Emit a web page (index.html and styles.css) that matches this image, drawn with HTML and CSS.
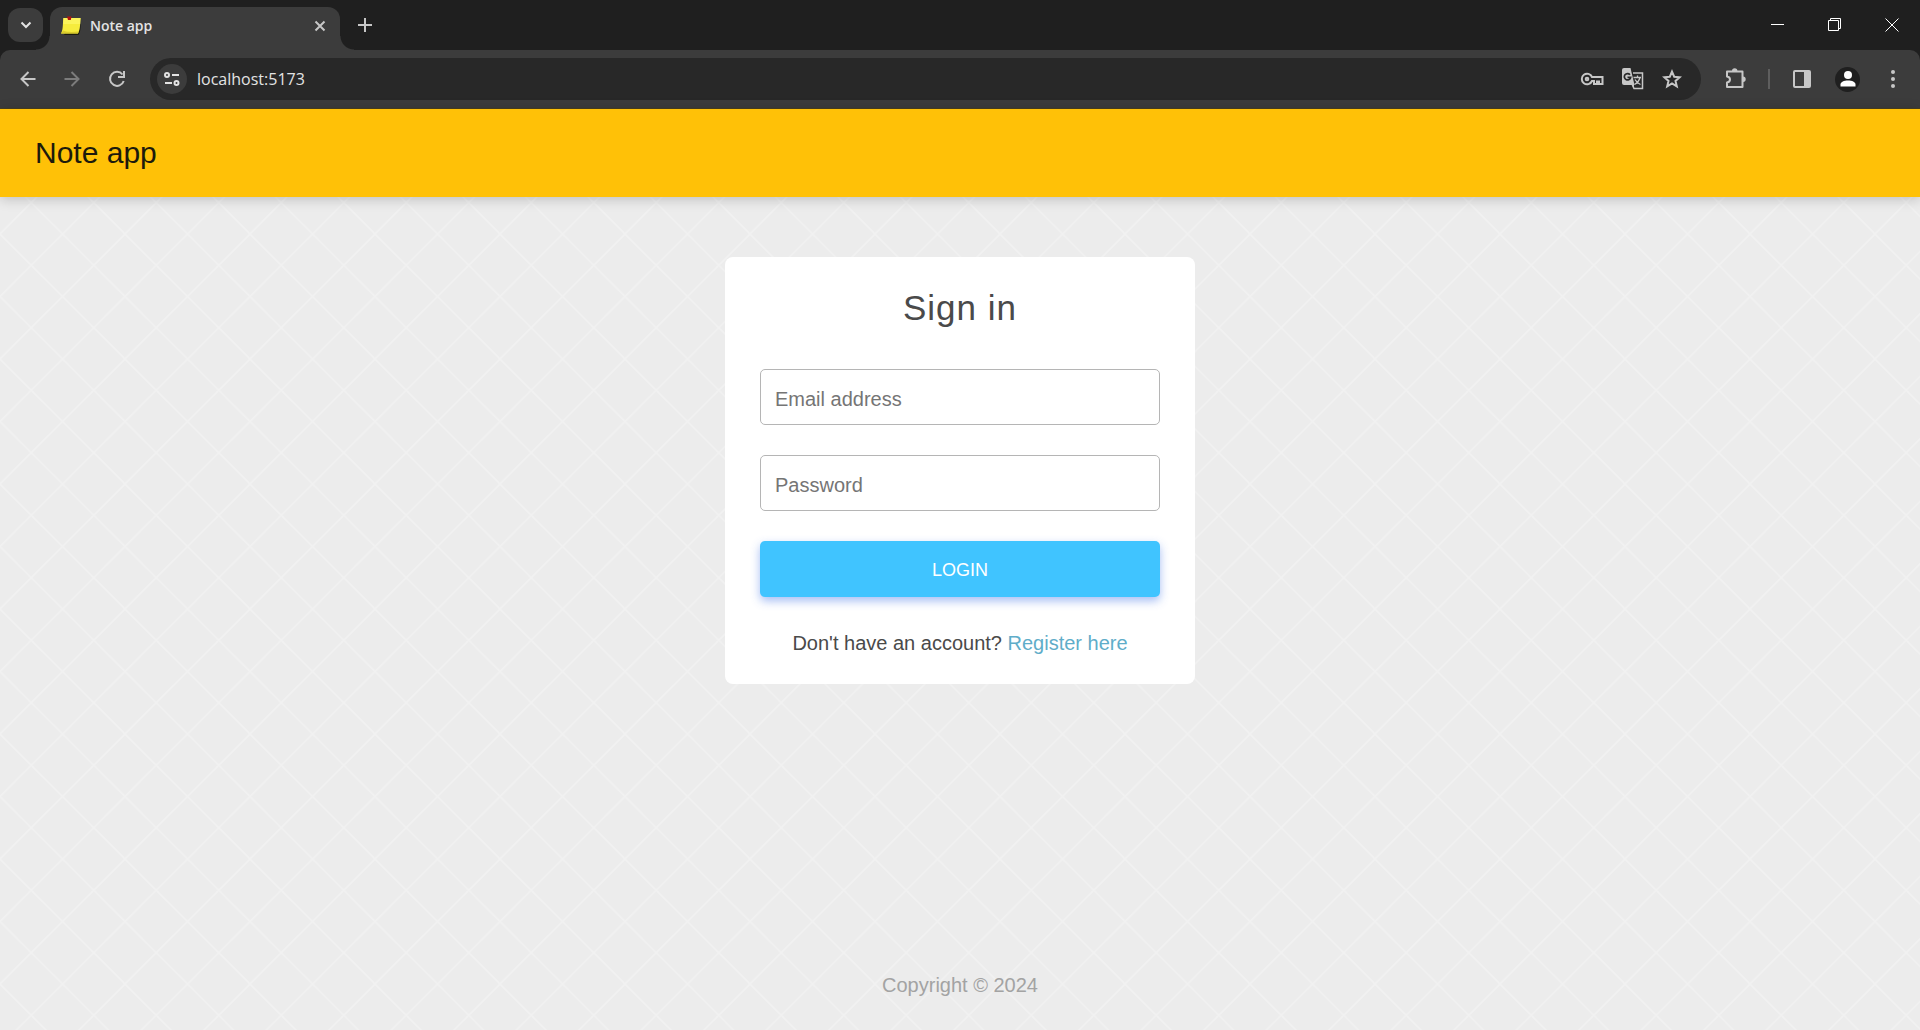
FILE: index.html
```html
<!DOCTYPE html>
<html lang="en">
<head>
<meta charset="utf-8">
<meta name="viewport" content="width=device-width, initial-scale=1">
<title>Note app</title>
<link rel="stylesheet" href="styles.css">
</head>
<body>
<div class="browser">
  <div class="tab-strip">
    <button class="tab-search" aria-label="Search tabs">
      <svg width="12" height="12" viewBox="0 0 12 12" fill="none" stroke="currentColor" stroke-width="2"><path d="M1.500 3.500 6 8l4.500-4.500"/></svg>
    </button>
    <div class="tab">
      <svg class="favicon" width="20" height="20" viewBox="0 0 20 20">
        <path d="M3 19c2-2 2-5 2-8l14.500-3c.5 4-.5 9-2 11z" fill="#1c1c10"/>
        <path d="M2.500 2h17c-.5 6 0 11-2.500 15.500H0C2.500 13 1.500 7 2.500 2z" fill="#f6ec3d"/>
        <path d="M2.500 2h17l-.4 6H2.300z" fill="#fbf45a"/>
        <path d="M0 17.500c1-.8 1.600-2 2-3 5 2 10 1.500 15.700 1-.3.8-.5 1.400-.7 2z" fill="#dccd2b"/>
        <path d="M6 .5h4.500L9.800 4H7z" fill="#b3140d"/>
      </svg>
      <span class="tab-title">Note app</span>
      <button class="icon-button" aria-label="Close tab">
        <svg width="12" height="12" viewBox="0 0 12 12" stroke="currentColor" stroke-width="2"><path d="m1.500 1.500 9 9m0-9-9 9"/></svg>
      </button>
    </div>
    <button class="new-tab" aria-label="New tab">
      <svg width="14" height="14" viewBox="0 0 14 14" stroke="currentColor" stroke-width="2"><path d="M7 0v14M0 7h14"/></svg>
    </button>
    <div class="window-controls">
      <button class="window-button" aria-label="Minimize"><svg width="14" height="14" viewBox="0 0 14 14" stroke="currentColor"><path d="M0 6.500h13"/></svg></button>
      <button class="window-button" aria-label="Restore"><svg width="14" height="14" viewBox="0 0 14 14" fill="none" stroke="currentColor"><path d="M.5 2.500h10v10H.5zM2.500 2.500v-2h10v10h-2"/></svg></button>
      <button class="window-button" aria-label="Close"><svg width="14" height="14" viewBox="0 0 14 14" stroke="currentColor"><path d="m.5.5 13 13m0-13-13 13"/></svg></button>
    </div>
  </div>
  <div class="toolbar">
    <div class="navigation">
      <button class="icon-button" aria-label="Back"><svg width="16" height="16" viewBox="0 0 16 16" fill="none" stroke="currentColor" stroke-width="2"><path d="M15.500 8H2M8.500 1 1.500 8l7 7"/></svg></button>
      <button class="icon-button disabled" aria-label="Forward" disabled><svg width="16" height="16" viewBox="0 0 16 16" fill="none" stroke="currentColor" stroke-width="2"><path d="M.5 8H14M7.500 1l7 7-7 7"/></svg></button>
      <button class="icon-button" aria-label="Reload"><svg width="18" height="18" viewBox="0 0 18 18" fill="none" stroke="currentColor" stroke-width="2"><path d="M14.500 4.500A7 7 0 1 0 15.700 11M16 1v6h-6"/></svg></button>
    </div>
    <div class="address-bar">
      <button class="site-info" aria-label="View site information">
        <svg width="16" height="14" viewBox="0 0 16 14" fill="none" stroke="currentColor" stroke-width="2"><circle cx="3" cy="3" r="2"/><path d="M8 3h7M1 11h7"/><circle cx="12.500" cy="11" r="2"/></svg>
      </button>
      <input class="url" type="text" value="localhost:5173" aria-label="Address">
      <div class="address-actions">
        <button class="icon-button" aria-label="Passwords"><svg width="24" height="14" viewBox="0 0 24 14" fill="none" stroke="currentColor" stroke-width="2"><path d="M12 5h10.500v7h-3.500V9.500h-2V12h-3V9H12A5.300 5.300 0 1 1 12 5z"/><circle cx="7" cy="7" r="1.300"/></svg></button>
        <button class="icon-button" aria-label="Translate"><svg width="22" height="22" viewBox="0 0 22 22"><path d="M11 5h9.500v15.500h-8.500L10 16" fill="none" stroke="currentColor" stroke-width="1.500"/><path d="M2 0h6.500l4 17H2a2 2 0 0 1-2-2V2a2 2 0 0 1 2-2z" fill="currentColor"/><path d="M12 16.500h-2.500l2.500 4z" fill="currentColor"/><path d="M8 6.700A3.200 3.200 0 1 0 8.700 9.300H5.500" fill="none" stroke="#282828" stroke-width="1.700"/><path d="M11.500 9.500h7.500M15.500 7.500v2M18 9.500c-.8 3-3 5.500-5.500 7M13 11.500c1.200 2.200 3 4 5.500 5" fill="none" stroke="currentColor" stroke-width="1.300"/></svg></button>
        <button class="icon-button" aria-label="Bookmark"><svg width="20" height="20" viewBox="0 0 20 20" fill="none" stroke="currentColor" stroke-width="2"><path d="m10 2.600 2.200 5.100 5.500.5-4.200 3.700 1.300 5.400-4.800-2.900-4.800 2.900 1.300-5.400-4.200-3.700 5.500-.5z"/></svg></button>
      </div>
    </div>
    <div class="browser-actions">
      <button class="icon-button" aria-label="Extensions"><svg width="22" height="22" viewBox="0 0 22 22" fill="none" stroke="currentColor" stroke-width="2"><path d="M2 3.500h15.500v15.500H2v-4.500c2-.3 3-1.500 3-3s-1-2.700-3-3z" stroke-linejoin="round"/><path d="M7 3a2.700 2.700 0 0 1 5.400 0zM18 8.500a2.700 2.700 0 0 1 0 5.400z" fill="currentColor" stroke="none"/></svg></button>
      <span class="divider"></span>
      <button class="icon-button" aria-label="Side panel"><svg width="18" height="18" viewBox="0 0 18 18"><rect x="1" y="1" width="16" height="16" rx="1" fill="none" stroke="currentColor" stroke-width="2"/><path d="M11 1h6v16h-6z" fill="currentColor"/></svg></button>
      <button class="profile" aria-label="Profile"><svg width="16" height="16" viewBox="0 0 16 16" fill="currentColor"><circle cx="8" cy="4" r="4"/><path d="M.5 15.500v-2C.5 11 4 9.500 8 9.500s7.500 1.500 7.500 4v2z"/></svg></button>
      <button class="icon-button menu" aria-label="Menu"><svg width="4" height="18" viewBox="0 0 4 18" fill="currentColor"><circle cx="2" cy="2" r="2"/><circle cx="2" cy="9" r="2"/><circle cx="2" cy="16" r="2"/></svg></button>
    </div>
  </div>
</div>
<div class="page">
  <header class="app-header"><h1 class="app-title">Note app</h1></header>
  <main class="content">
    <form class="card">
      <h2 class="card-title">Sign in</h2>
      <input class="field" type="email" placeholder="Email address" aria-label="Email address">
      <input class="field" type="password" placeholder="Password" aria-label="Password">
      <button class="login" type="submit">LOGIN</button>
      <p class="register">Don't have an account? <a href="#register">Register here</a></p>
    </form>
  </main>
  <footer class="footer">Copyright © 2024</footer>
</div>
</body>
</html>
```

FILE: styles.css
```css
* { box-sizing: border-box; }

body {
  margin: 0;
  min-height: 100vh;
  display: flex;
  flex-direction: column;
  font: 20px/24px "Liberation Sans", Arial, sans-serif;
  color: #4a4a4a;
}

button { padding: 0; border: 0; background: none; color: inherit; font: inherit; }
svg { display: block; }

/* Browser window */
.browser {
  background: #1f1f1f;
  color: #c7c7c7;
  font-family: "Open Sans", "Noto Sans", sans-serif;
}

.tab-strip { display: flex; height: 50px; padding-left: 8px; }

.tab-search {
  display: grid;
  place-items: center;
  width: 35px;
  height: 34px;
  margin-top: 8px;
  border-radius: 12px;
  background: #3c3c3c;
  color: #e3e3e3;
}

.tab {
  position: relative;
  display: flex;
  align-items: center;
  gap: 9px;
  width: 290px;
  height: 43px;
  margin: 7px 0 0 7px;
  padding: 0 14px 6px 11px;
  border-radius: 12px 12px 0 0;
  background: #3c3c3c;
}

/* Concave corners where the tab meets the toolbar */
.tab::before,
.tab::after {
  content: "";
  position: absolute;
  bottom: 0;
  width: 14px;
  height: 14px;
}
.tab::before { right: 100%; background: radial-gradient(circle at 0 0, transparent 13px, #3c3c3c 14px); }
.tab::after { left: 100%; background: radial-gradient(circle at 100% 0, transparent 13px, #3c3c3c 14px); }

.tab-title { flex: 1; font-size: 14px; line-height: 20px; font-weight: 600; color: #e3e3e3; }

.icon-button { display: grid; place-items: center; flex: none; }
.disabled { color: #7c7c7c; }
.new-tab { margin-left: 18px; }

.window-controls { display: flex; margin-left: auto; }
.window-button { display: grid; place-items: center; width: 57px; color: #fff; }

.toolbar {
  display: flex;
  align-items: center;
  height: 59px;
  padding: 0 25px 0 20px;
  border-bottom: 1px solid #4a4020;
  border-radius: 10px 10px 0 0;
  background: #3c3c3c;
}

.navigation { display: flex; align-items: center; gap: 28px; }

.address-bar {
  display: flex;
  align-items: center;
  flex: 1;
  height: 42px;
  margin: 0 24px;
  padding: 0 19px 0 7px;
  border-radius: 21px;
  background: #282828;
}

.site-info {
  display: grid;
  place-items: center;
  width: 30px;
  height: 30px;
  border-radius: 50%;
  background: #3c3c3c;
  color: #e3e3e3;
}

.url {
  flex: 1;
  min-width: 0;
  margin-left: 10px;
  padding: 0;
  border: 0;
  outline: 0;
  background: none;
  color: #e3e3e3;
  font: 16px/24px "Open Sans", "Noto Sans", sans-serif;
}

.address-actions { display: flex; align-items: center; gap: 18px; }
.browser-actions { display: flex; align-items: center; }
.divider { width: 2px; height: 20px; margin: 0 23px 0 21px; background: #5e5e5e; }

.profile {
  display: grid;
  place-items: center;
  width: 25px;
  height: 25px;
  margin: 0 31px 0 24px;
  border-radius: 50%;
  background: #1f1f1f;
  color: #fff;
}

/* Note app */
.page {
  flex: 1;
  display: flex;
  flex-direction: column;
  background: #ececec url("data:image/svg+xml,%3Csvg xmlns='http://www.w3.org/2000/svg' width='125' height='125' viewBox='0 0 2 2' fill='none' stroke-width='.026'%3E%3Cpath d='M-1 0l3 3M-1-1l4 4M-1-2l4 4M-1 2l3-3M-1 3l4-4M0 3l3-3' stroke='%23f1f1f1'/%3E%3C/svg%3E");
}

.app-header {
  display: flex;
  align-items: center;
  height: 88px;
  padding: 0 35px;
  background: #ffc107;
  box-shadow: 0 2px 12px rgba(0, 0, 0, .2);
}

.app-title { margin: 0; font-size: 30px; line-height: 36px; font-weight: 400; color: #1d1a0c; }

.content { flex: 1; display: flex; justify-content: center; align-items: flex-start; padding: 60px 20px; }

.card {
  display: flex;
  flex-direction: column;
  gap: 30px;
  width: 100%;
  max-width: 470px;
  padding: 30px 35px 29px;
  border-radius: 8px;
  background: #fff;
}

.card-title {
  margin: 0 0 10px;
  font-size: 35px;
  line-height: 42px;
  font-weight: 400;
  letter-spacing: 1px;
  text-align: center;
}

.field {
  width: 100%;
  height: 56px;
  padding: 4px 14px 0;
  border: 1px solid #b5b5b5;
  border-radius: 5px;
  background: #fff;
  color: #4a4a4a;
  font: inherit;
}
.field::placeholder { color: #757575; }

.login {
  height: 56px;
  padding-top: 2px;
  border-radius: 5px;
  background: #40c4ff;
  box-shadow: 0 4px 10px rgba(60, 110, 230, .45);
  color: #fff;
  font-size: 18px;
}

.register { margin: 4px 0 0; text-align: center; }
.register a { color: #5fadc9; text-decoration: none; }

.footer { padding: 0 20px 33px; text-align: center; color: #a3a3a3; }
```
